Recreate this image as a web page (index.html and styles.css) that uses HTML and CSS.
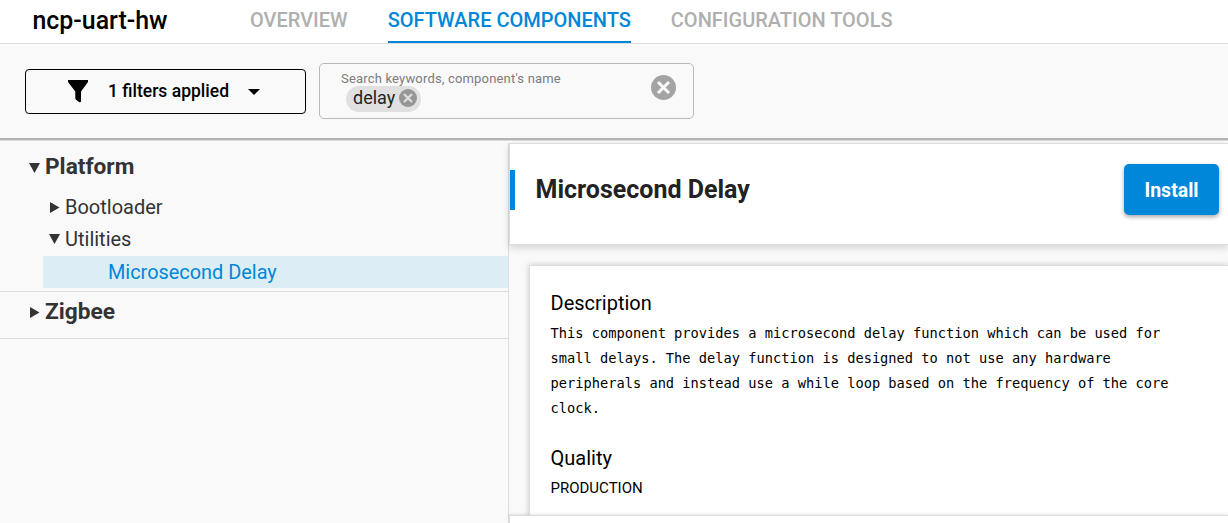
FILE: index.html
```html
<!DOCTYPE html>
<html lang="en">
<head>
<meta charset="utf-8">
<title>ncp-uart-hw</title>
<link rel="stylesheet" href="styles.css">
</head>
<body>
<header class="topbar">
  <h1 class="project">ncp-uart-hw</h1>
  <nav class="tabs">
    <a class="tab">OVERVIEW</a>
    <a class="tab active">SOFTWARE COMPONENTS</a>
    <a class="tab">CONFIGURATION TOOLS</a>
  </nav>
</header>
<section class="toolbar">
  <button class="filter">
    <svg class="funnel" width="20" height="23" viewBox="0 0 20 23"><path d="M0 0H20V2L13 11.500V21.500Q12.500 22.700 11 22L8 19.700Q7.300 19 7.300 18V11.500L0 2Z"/></svg>
    <span class="filter-label">1 filters applied</span>
    <svg width="12" height="6" viewBox="0 0 12 6"><path d="M0 0H12L6 6Z"/></svg>
  </button>
  <div class="search">
    <div class="search-body">
      <label class="search-label">Search keywords, component's name</label>
      <span class="chip"><span>delay</span>
        <svg width="18" height="18" viewBox="0 0 18 18"><circle cx="9" cy="9" r="9" fill="#969696"/><path d="M5 5L13 13M13 5L5 13" stroke="#e0e0e0" stroke-width="2.200"/></svg>
      </span>
    </div>
    <svg class="clear" width="25" height="25" viewBox="0 0 25 25"><circle cx="12.500" cy="12.500" r="12.500" fill="#a4a4a4"/><path d="M7 7L18 18M18 7L7 18" stroke="#fafafa" stroke-width="3"/></svg>
  </div>
</section>
<main class="main">
  <aside class="tree">
    <section class="group platform">
      <div class="group-title"><svg width="11" height="10" viewBox="0 0 11 10"><path d="M0 0H11L5.500 10Z"/></svg><span>Platform</span></div>
      <div class="branch"><svg width="11" height="11" viewBox="0 0 11 11"><path d="M1 0L10.500 5.500L1 11Z"/></svg><span>Bootloader</span></div>
      <div class="branch"><svg width="11" height="10" viewBox="0 0 11 10"><path d="M0 0H11L5.500 10Z"/></svg><span>Utilities</span></div>
      <div class="leaf"><span>Microsecond Delay</span></div>
    </section>
    <section class="group zigbee">
      <div class="group-title"><svg width="11" height="11" viewBox="0 0 11 11"><path d="M1 0L10.500 5.500L1 11Z"/></svg><span>Zigbee</span></div>
    </section>
  </aside>
  <section class="detail">
    <header class="detail-head">
      <h2 class="detail-title"><span>Microsecond Delay</span></h2>
      <button class="install">Install</button>
    </header>
    <div class="scroll">
      <article class="card">
        <h3 class="card-heading">Description</h3>
        <p class="description">This component provides a microsecond delay function which can be used for<br>small delays. The delay function is designed to not use any hardware<br>peripherals and instead use a while loop based on the frequency of the core<br>clock.</p>
        <h3 class="card-heading">Quality</h3>
        <p class="quality">PRODUCTION</p>
      </article>
    </div>
    <footer class="detail-foot"></footer>
  </section>
</main>
</body>
</html>
```
FILE: styles.css
```css
* { box-sizing: border-box; margin: 0; }
body {
  width: 1228px; height: 523px; overflow: hidden;
  display: flex; flex-direction: column;
  background: #f9f9f9; color: #000;
  font-family: Roboto, "Liberation Sans", sans-serif;
}
svg { flex: none; }
.topbar { height: 44px; flex: none; display: flex; background: #fff; border-bottom: 1px solid #ddd; padding-left: 32.5px; }
.project { width: 217.5px; font-size: 24.9px; font-weight: 500; line-height: 42px; }
.tabs { display: flex; gap: 40px; }
.tab { height: 43px; font-size: 20px; font-weight: 500; line-height: 40px; color: #afafaf; white-space: nowrap; }
.tab.active { color: #0087d9; border-bottom: 2px solid #0087d9; }
.toolbar { height: 97px; flex: none; display: flex; align-items: flex-start; gap: 13px; padding: 19px 25px 0; border-bottom: 1px solid #ddd; box-shadow: inset 0 -2px #b3b3b3; }
.filter { width: 281px; height: 45px; margin-top: 6px; display: flex; align-items: center; border: 1px solid #000; border-radius: 4px; background: #f9f9f9; font: 500 17.5px Roboto, sans-serif; color: #000; padding: 0 0 0 42px; }
.filter-label { width: 122px; margin: 0 18px 0 20px; padding-bottom: 2px; text-align: left; white-space: nowrap; }
.search { width: 375px; height: 56px; display: flex; justify-content: space-between; border: 1px solid #b9b9b9; border-radius: 5px; padding: 0 17px 0 21px; }
.search-body { display: flex; flex-direction: column; align-items: flex-start; padding-top: 7px; }
.search-label { font-size: 13px; line-height: 16px; margin-bottom: -1px; position: relative; z-index: 1; color: #7c7c7c; letter-spacing: .18px; white-space: nowrap; }
.chip { margin-left: 5px; width: 75px; height: 26px; border-radius: 13px; background: #e0e0e0; display: flex; align-items: center; justify-content: space-between; padding: 0 4px 2px 7px; font-size: 18px; color: #222; }
.chip span { padding-bottom: 1px; }
.clear { margin-top: 11px; }
.main { flex: 1; min-height: 0; display: flex; }
.tree { width: 508px; color: #333; fill: #333; }
.group { border-bottom: 1px solid #ddd; }
.platform { height: 151px; padding-top: 5px; }
.zigbee { height: 47px; }
.group-title { height: 40px; padding-left: 29px; display: flex; align-items: center; gap: 5px; font-size: 22.7px; font-weight: 700; }
.zigbee .group-title { height: 38px; }
.group-title svg { margin-top: 3px; }
.branch { height: 32px; padding-left: 49px; display: flex; align-items: center; gap: 5px; font-size: 20px; }
.group-title + .branch { margin-top: 5px; }
.leaf { height: 32px; margin: 1px 0 0 43px; padding-left: 65px; background: #dcedf5; color: #0087d9; font-size: 19.9px; line-height: 33px; }
.detail { flex: 1; min-width: 0; margin-top: 2px; display: flex; flex-direction: column; border-left: 1px solid #ddd; }
.detail-head { position: relative; z-index: 1; height: 102px; flex: none; display: flex; align-items: center; justify-content: space-between; background: #fff; border: solid #ddd; border-width: 1px 0 1px 1px; box-shadow: 0 3px 7px rgba(0,0,0,.15); padding-right: 9px; }
.detail-title { height: 40px; margin-top: -9px; border-left: 5px solid #0087d9; padding-left: 20.5px; color: #222; font-size: 25px; font-weight: 700; line-height: 40px; }
.install { width: 95px; height: 51px; margin-top: -9px; border: 0; border-radius: 5px; background: #0087d9; color: #fff; font: 700 19.5px Roboto, sans-serif; padding: 2px 0 0; box-shadow: 0 2px 4px rgba(0,0,0,.35); }
.scroll { flex: 1; min-height: 0; overflow: hidden; padding: 20px 0 0 20px; }
.card { height: 300px; background: #fff; border: solid #ddd; border-width: 1px 0 0 1px; box-shadow: 0 0 6px rgba(0,0,0,.2); padding: 25px 0 0 20.5px; }
.card-heading { font-size: 20px; font-weight: 400; line-height: 25px; }
.description { margin: 5px 0 25px; font: 13.7px/25px "DejaVu Sans Mono", "Liberation Mono", monospace; white-space: nowrap; }
.quality { font-size: 15px; line-height: 20px; margin-top: 7px; }
.detail-foot { position: relative; z-index: 1; height: 8px; flex: none; background: #fff; border: solid #ddd; border-width: 1px 0 0 1px; box-shadow: 0 -1px 3px rgba(0,0,0,.1); }
```
